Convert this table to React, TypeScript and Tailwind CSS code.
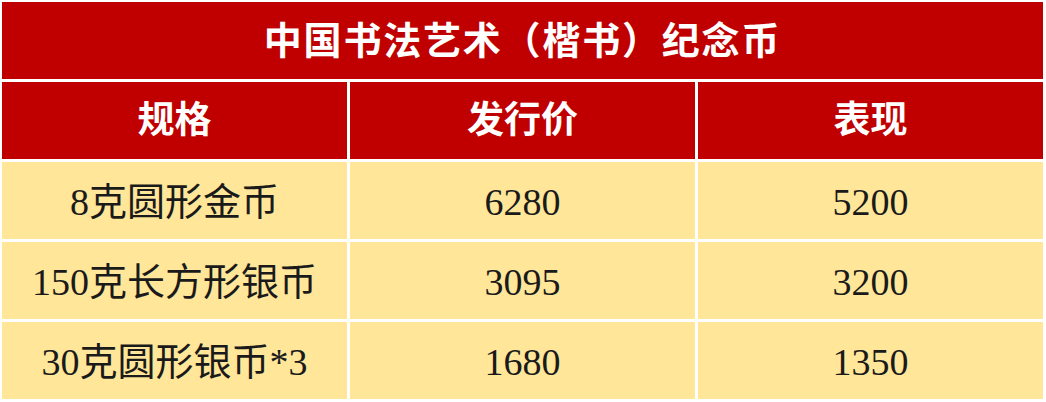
import React from 'react';

const rows = [
  { spec: '8克圆形金币', price: '6280', now: '5200' },
  { spec: '150克长方形银币', price: '3095', now: '3200' },
  { spec: '30克圆形银币*3', price: '1680', now: '1350' },
];

const font = { fontFamily: '"Liberation Serif", "Noto Sans CJK SC", serif' };

export default function App() {
  return (
    <div className="w-[1046px] h-[402px] bg-white pt-[2px] pl-[2px] pr-[3px] flex flex-col gap-[3px]" style={font}>
      {/* Title */}
      <div className="h-[77px] bg-[#c00000] flex items-center justify-center">
        <span className="text-white font-bold text-[38px] tracking-[1.8px] leading-none">
          中国书法艺术（楷书）纪念币
        </span>
      </div>

      {/* Header */}
      <div className="grid grid-cols-3 gap-[3px] h-[77px]">
        {['规格', '发行价', '表现'].map((h) => (
          <div key={h} className="bg-[#c00000] flex items-center justify-center">
            <span className="text-white font-bold text-[37px] leading-none">{h}</span>
          </div>
        ))}
      </div>

      {/* Body rows */}
      {rows.map((r) => (
        <div key={r.spec} className="grid grid-cols-3 gap-[3px] h-[77px]">
          {[r.spec, r.price, r.now].map((c, i) => (
            <div key={i} className="bg-[#ffe699] flex items-center justify-center">
              <span className="text-[#1a1a1a] text-[38px] leading-none pt-[3px]">{c}</span>
            </div>
          ))}
        </div>
      ))}
    </div>
  );
}
